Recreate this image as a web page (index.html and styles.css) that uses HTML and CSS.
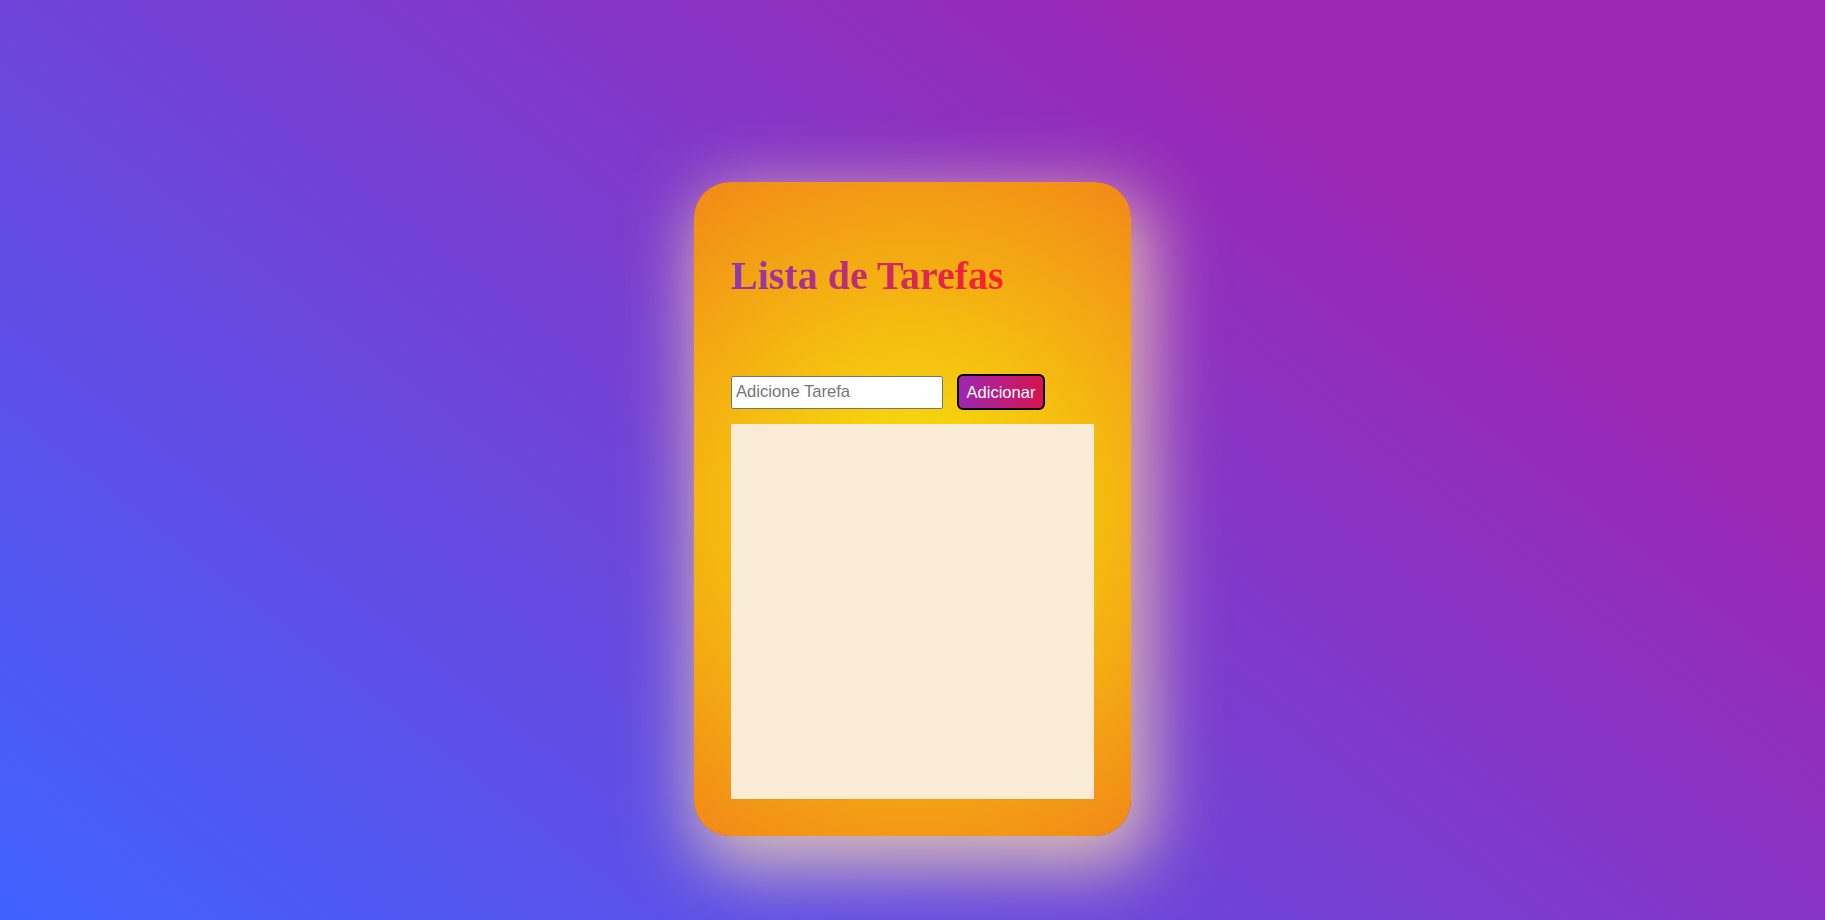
FILE: index.html
```html
<!DOCTYPE html>
<html lang="pt">
<head>
<meta charset="utf-8">
<title>Lista de Tarefas</title>
<link rel="stylesheet" href="styles.css">
</head>
<body>
<main class="page">
  <section class="card">
    <h1 class="title"><span class="title-text">Lista de Tarefas</span></h1>
    <form class="add-row">
      <input class="task-input" type="text" placeholder="Adicione Tarefa">
      <button class="add-btn" type="button">Adicionar</button>
    </form>
    <ul class="task-list"></ul>
  </section>
</main>
</body>
</html>
```

FILE: styles.css
```css
html, body {
  margin: 0;
  padding: 0;
}

body {
  min-height: 100vh;
  background: linear-gradient(38deg, #4062ff 0%, #9c27b4 78%);
  font-family: "Liberation Sans", Arial, sans-serif;
  overflow: hidden;
}

.page {
  display: flex;
  justify-content: center;
  padding-top: 182px;
}

.card {
  box-sizing: border-box;
  width: 437px;
  height: 654px;
  padding: 37px;
  border-radius: 36px;
  background: radial-gradient(circle, #f7e80a 0%, #f28818 100%);
  box-shadow: 10px 22px 70px 10px rgba(255, 230, 170, 0.75);
  display: flex;
  flex-direction: column;
}

.title {
  margin: 35px 0 0;
  font-family: "Liberation Serif", "Times New Roman", serif;
  font-size: 40px;
  line-height: 44px;
  font-weight: bold;
}

.title-text {
  background: linear-gradient(to right, #8b38b4, #ff1f26);
  -webkit-background-clip: text;
  background-clip: text;
  color: transparent;
}

.add-row {
  display: flex;
  align-items: center;
  gap: 14px;
  margin: 76px 0 0;
  height: 36px;
}

.task-input {
  box-sizing: border-box;
  width: 212px;
  height: 33px;
  margin: 0;
  padding: 0 4px;
  border: 1px solid #767676;
  border-radius: 2px;
  background: #fff;
  font-family: "Liberation Sans", Arial, sans-serif;
  font-size: 16.6px;
  color: #222;
}

.task-input::placeholder {
  color: #757575;
}

.add-btn {
  box-sizing: border-box;
  width: 88px;
  height: 36px;
  margin: 0;
  padding: 0;
  border: 2px solid #000;
  border-radius: 6px;
  background: linear-gradient(to right, #9c27b0, #d8134f);
  color: #fff;
  font-family: "Liberation Sans", Arial, sans-serif;
  font-size: 16.5px;
}

.task-list {
  box-sizing: border-box;
  height: 375px;
  margin: 14px 0 0;
  padding: 0;
  list-style: none;
  background: #faebd7;
}
```
